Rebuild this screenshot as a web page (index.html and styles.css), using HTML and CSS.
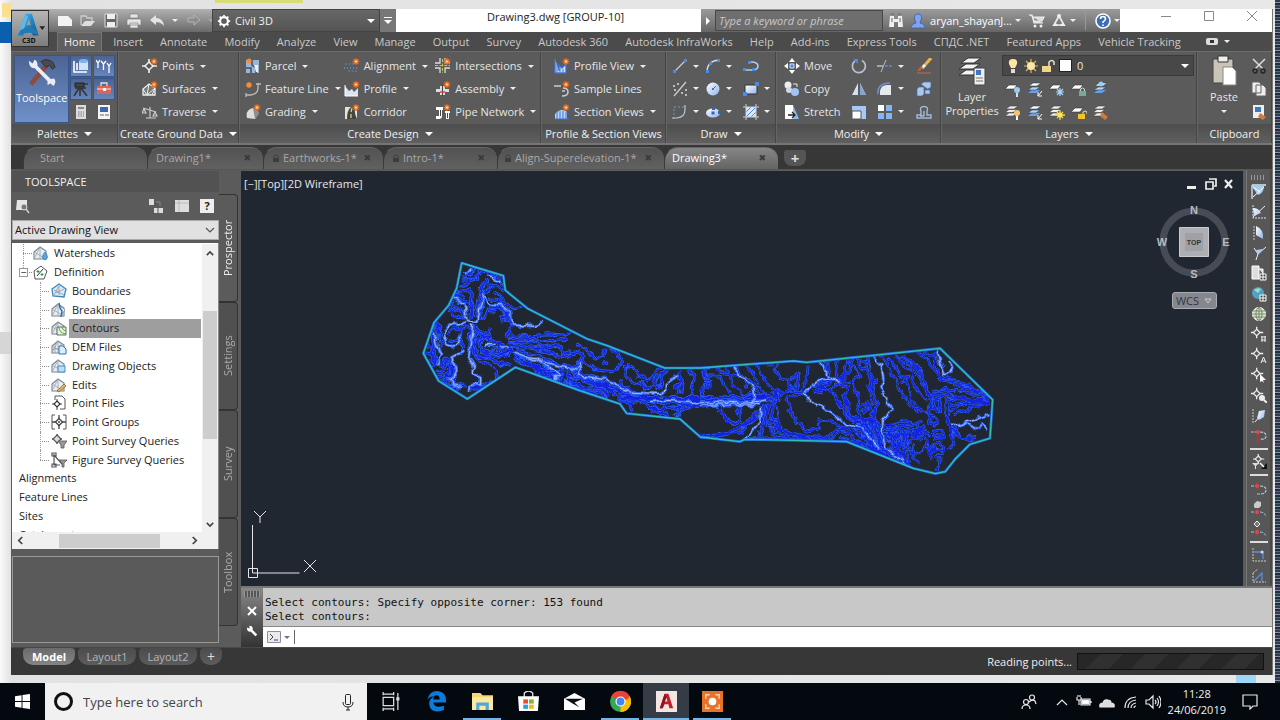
FILE: index.html
```html
<!DOCTYPE html>
<html lang="en">
<head>
<meta charset="utf-8">
<title>Drawing3.dwg [GROUP-10]</title>
<link rel="stylesheet" href="styles.css">
</head>
<body>
<svg class="defs" aria-hidden="true">
<defs>
<linearGradient id="gb" x1="0" y1="0" x2="1" y2="1"><stop offset="0" stop-color="#fff"/><stop offset="1" stop-color="#8fb4e8"/></linearGradient>
<linearGradient id="gA" x1="0" y1="0" x2="1" y2="1"><stop offset="0" stop-color="#5ec0ee"/><stop offset=".5" stop-color="#1c86c8"/><stop offset="1" stop-color="#0d5488"/></linearGradient>
<symbol id="star" viewBox="0 0 16 16"><path d="M12 0v7M8.500 3.500h7M9.500 1l5 5M14.500 1l-5 5" stroke="#e8641b" stroke-width="1.300"/><circle cx="12" cy="3.500" r="2" fill="#f98a35"/><circle cx="12" cy="3.500" r="1" fill="#ffd9a0"/></symbol>
<symbol id="node" viewBox="0 0 16 16"><path d="M7 1v4M7 11v4M0 8h4M10 8h5" stroke="#eee" stroke-width="1.600"/><path d="M7 4l4 4-4 4-4-4z" fill="#555" stroke="#eee" stroke-width="1.500"/></symbol>
<symbol id="pt" viewBox="0 0 16 16"><use href="#node"/><use href="#star"/></symbol>
<symbol id="surf" viewBox="0 0 16 16"><path d="M1 8l6-5 6 4v7H1z" fill="#777" stroke="#eee" stroke-width="1.300"/><path d="M1 8l4 6 8-7-3 7M7 3l-2 11" stroke="#eee" fill="none"/><use href="#star"/></symbol>
<symbol id="trav" viewBox="0 0 16 16"><path d="M1 4l13 4M8 3v11M4 14h10M2 5l-2 4h4zM13 8l-2 4h4z" fill="none" stroke="#ccc" stroke-width="1.200"/></symbol>
<symbol id="parcel" viewBox="0 0 16 16"><path d="M1 2h13v13H1z" fill="#9bb5d4"/><path d="M1 10h5v5M7 2v5l4 3v5" fill="none" stroke="#3f4c66" stroke-width="1.500"/><path d="M9 7h4v7h-2z" fill="#e8eef5"/><circle cx="4" cy="3" r="2.500" fill="#f98a35"/></symbol>
<symbol id="fline" viewBox="0 0 16 16"><path d="M1 14h5q7-1 7-7V2M1 12v4M11 3h5" fill="none" stroke="#bbb" stroke-width="1.300"/><circle cx="4" cy="4" r="2.700" fill="#f98a35"/></symbol>
<symbol id="grad" viewBox="0 0 16 16"><path d="M2 14q-2-8 6-10l5 6-3 5z" fill="#ddd"/><path d="M8 4q6 1 6 6l-4 5z" fill="#8a8f96"/><use href="#star"/></symbol>
<symbol id="align" viewBox="0 0 16 16"><path d="M1 6h10M4 13h10" stroke="#5a86d8" stroke-width="1.200" stroke-dasharray="2 1.500"/><path d="M0 10h14" stroke="#9ab" stroke-dasharray="1 2"/><use href="#star"/></symbol>
<symbol id="prof" viewBox="0 0 16 16"><path d="M1 5l4 5 3-2 2 3 4-4v8H1z" fill="#dce4ee"/><path d="M1 4v11h13" fill="none" stroke="#fff"/><use href="#star"/></symbol>
<symbol id="corr" viewBox="0 0 16 16"><path d="M1 3h12v12H1z" fill="#dfe5dc"/><path d="M3 15q0-9 4-12h4q-1 6 2 12z" fill="#444"/><path d="M8 4l-1 4M7 10v4" stroke="#f5d142" stroke-width="1.300"/><use href="#star"/></symbol>
<symbol id="inter" viewBox="0 0 16 16"><path d="M5 0v5H0M10 0v5h5M5 15v-5H0M10 15v-5h5" fill="none" stroke="#ddd" stroke-width="1.300"/><path d="M7.500 1v14M0 7.500h15" stroke="#b9cc4c" stroke-dasharray="3 1.500"/><use href="#star"/></symbol>
<symbol id="asm" viewBox="0 0 16 16"><path d="M1 8h13v3H1zM5 5h5v9H5z" fill="#ddd"/><path d="M7.500 3v12" stroke="#444"/><path d="M5 11h5" stroke="#d04040" stroke-width="1.500"/><use href="#star"/></symbol>
<symbol id="pipe" viewBox="0 0 16 16"><path d="M1 3h7v3H7v6q0 3-3 3H1v-3h3V6H1zM10 7h5v2h-1v6h-3V9h-1z" fill="#fff"/><path d="M5.500 6v6M12.500 9v5" stroke="#444"/><use href="#star"/></symbol>
<symbol id="pview" viewBox="0 0 16 16"><path d="M1 1v14h11V6L8 10 5 7v6" fill="#cfdff7" stroke="#3a72d8" stroke-width="1.300"/><path d="M3 14V6M6 14V9M9 14v-3" stroke="#3a72d8"/><use href="#star"/></symbol>
<symbol id="sline" viewBox="0 0 16 16"><path d="M0 5h7M9 7q5 0 5 4t-6 4M8 10h3" fill="none" stroke="#ccc" stroke-width="1.500"/><use href="#star"/></symbol>
<symbol id="sview" viewBox="0 0 16 16"><path d="M1 15V10q6-7 12-2v7z" fill="#bcd4f5"/><path d="M3 15V8M6 15V7M9 15V7M12 15V8M1 15h14" stroke="#3a72d8"/><use href="#star"/></symbol>
<symbol id="line" viewBox="0 0 16 16"><path d="M2 14L14 2" stroke="#ccc" stroke-width="1.300"/><path d="M1 12h3v3H1zM12 1h3v3h-3z" fill="#4b8be8"/></symbol>
<symbol id="arc" viewBox="0 0 16 16"><path d="M2 14Q2 3 14 2" fill="none" stroke="#d8e2ee" stroke-width="1.300"/><path d="M1 12h3v3H1zM12 1h3v3h-3zM4 4h3v3H4z" fill="#4b8be8"/></symbol>
<symbol id="pline" viewBox="0 0 16 16"><path d="M2 12h9q4-1 4-4t-5-4H6" fill="none" stroke="#bcd" stroke-width="1.500"/><path d="M0 10h3v3H0zM9 10h3v3H9zM5 3h3v3H5z" fill="#4b8be8"/></symbol>
<symbol id="xline" viewBox="0 0 16 16"><path d="M2 15L14 1" stroke="#ccc" stroke-width="1.300"/><path d="M1 5h2M5 3h2M9 12h2M13 9h2M13 14h2M2 9h2" stroke="#ddd" stroke-width="1.500"/></symbol>
<symbol id="circ" viewBox="0 0 16 16"><circle cx="8" cy="8" r="6.500" fill="url(#gb)"/><path d="M8 8l3-3" stroke="#3a72d8"/><path d="M7 7h2v2H7z" fill="#3a72d8"/></symbol>
<symbol id="rect" viewBox="0 0 16 16"><path d="M2 4h12v9H2z" fill="url(#gb)" stroke="#333"/><path d="M0 11h4v4H0zM12 1h4v4h-4z" fill="#4b8be8"/></symbol>
<symbol id="arc2" viewBox="0 0 16 16"><path d="M2 15V3h11" stroke="#5da0e0" fill="none" stroke-dasharray="2 2"/><path d="M0 14h5q8-1 8-8V1" fill="none" stroke="#bcc8c8" stroke-width="1.200"/></symbol>
<symbol id="ell" viewBox="0 0 16 16"><ellipse cx="8" cy="9" rx="7" ry="4.500" fill="url(#gb)"/><path d="M6.500 7.500h3v3h-3zM7 3h3v3H7zM13 7h3v3h-3z" fill="#3a62b8"/></symbol>
<symbol id="hatch" viewBox="0 0 16 16"><path d="M3 3h10v10H3z" fill="#dceaff"/><path d="M3 8l5-5M3 13L13 3M8 13l5-5" stroke="#4b8be8"/><path d="M3 0v16M13 0v16M0 3h16M0 13h16" stroke="#ccd" /></symbol>
<symbol id="move" viewBox="0 0 16 16"><path d="M8 0l3 4H5zM8 16l3-4H5zM0 8l4-3v6zM16 8l-4-3v6z" fill="#fff"/><path d="M6 6h4v4H6z" fill="#4b8be8" stroke="#cfe0ff"/></symbol>
<symbol id="copy" viewBox="0 0 16 16"><circle cx="4" cy="4" r="3.500" fill="#eee"/><circle cx="5" cy="9" r="3" fill="#cfd8e6"/><circle cx="11" cy="11" r="4" fill="#9fc3f2"/><path d="M9 3h4v3" fill="none" stroke="#eee"/></symbol>
<symbol id="stretch" viewBox="0 0 16 16"><path d="M1 1h8v14H1z" fill="#fff"/><path d="M9 1l6 14H9z" fill="#8db9ef"/><path d="M4 11h7M8 8l3 3-3 3" fill="none" stroke="#222" stroke-width="1.300"/></symbol>
<symbol id="rot" viewBox="0 0 16 16"><path d="M4 3a6.500 6.500 0 1 0 7-.5" fill="none" stroke="#b4c0d0" stroke-width="1.700"/><path d="M2 1h5v5z" fill="#4b8be8"/></symbol>
<symbol id="trim" viewBox="0 0 16 16"><path d="M0 8h6" stroke="#ccc" stroke-width="1.300"/><path d="M8 8h8" stroke="#4b8be8" stroke-width="1.300" stroke-dasharray="3 1"/><path d="M4 14l5-12" stroke="#bbb"/></symbol>
<symbol id="erase" viewBox="0 0 16 16"><path d="M15 0L8 8" stroke="#e7b54f" stroke-width="3"/><path d="M9 7l-3 3" stroke="#eee" stroke-width="3"/><path d="M7 9l-3 4H1l4-5z" fill="#d55a28"/><path d="M1 15h14" stroke="#c76a45"/></symbol>
<symbol id="mirror" viewBox="0 0 16 16"><path d="M7 2v12H1zM9 2v12h6z" fill="#d5e0ec"/><path d="M9 2v12h6z" fill="#86a5cc"/></symbol>
<symbol id="fillet" viewBox="0 0 16 16"><path d="M3 14V10q1-6 7-6h4v10z" fill="#e5e8ec"/><path d="M1 13q-1-11 12-11" fill="none" stroke="#6b94d6" stroke-width="1.500"/></symbol>
<symbol id="explode" viewBox="0 0 16 16"><path d="M5 3l3-2h7v5l-3 2M1 8l2-2h5v7l-2 2H1zM9 9h5v4H9z" fill="#a9c8f0" stroke="#456fa8" stroke-width=".7"/></symbol>
<symbol id="scale" viewBox="0 0 16 16"><path d="M1 2h14v13H1z" fill="#a7c8f4"/><path d="M1 7h9v8H1z" fill="#fff" stroke="#555"/></symbol>
<symbol id="array" viewBox="0 0 16 16"><path d="M1 1h6v6H1z" fill="#fff"/><path d="M9 1h6v6H9zM1 9h6v6H1zM9 9h6v6H9z" fill="#86b4f0"/></symbol>
<symbol id="offset" viewBox="0 0 16 16"><path d="M1 14h14v-3h-4V7.500q2-5-3-5t-3 5V11H1z" fill="none" stroke="#9dbbe0" stroke-width="1.400"/><path d="M4 12h4V7" fill="none" stroke="#cfe0f5"/></symbol>
<symbol id="stack" viewBox="0 0 16 16"><path d="M0 12l4-3h8l-4 3zM0 8.500l4-3h8l-4 3zM1 5l4-3h8L9 5z" fill="#eee" stroke="#444" stroke-width=".6"/></symbol>
<symbol id="stackb" viewBox="0 0 16 16"><path d="M1 12l4-3h8l-4 3z" fill="#6ba0ec"/><path d="M1 9l4-3h8l-4 3z" fill="#b7d2f7" stroke="#345" stroke-width=".6"/><path d="M2 5l4-3h8l-4 3z" fill="#fff" stroke="#345" stroke-width=".6"/></symbol>
<symbol id="sheet" viewBox="0 0 16 16"><path d="M0 8l4-4h8L9 8z" fill="#fff" stroke="#333" stroke-width=".6"/></symbol>
<symbol id="l1" viewBox="0 0 16 16"><use href="#sheet"/><circle cx="12" cy="9" r="3" fill="#9cc9f5"/><path d="M12 12v4" stroke="#dde" stroke-width="2"/></symbol>
<symbol id="l2" viewBox="0 0 16 16"><use href="#stackb"/><path d="M15 10l-4 5M11 11v4h4" stroke="#fff" fill="none"/></symbol>
<symbol id="l3" viewBox="0 0 16 16"><use href="#sheet"/><path d="M11 7v8M7 11h8M8 8l6 6M14 8l-6 6" stroke="#a9d2fa" stroke-width="1.200"/></symbol>
<symbol id="l4" viewBox="0 0 16 16"><use href="#sheet"/><path d="M8 10h7v5H8z" fill="#79a894"/><path d="M9.500 10V8q2-2 4 0v2" fill="none" stroke="#bde0d0"/></symbol>
<symbol id="l5" viewBox="0 0 16 16"><use href="#stackb"/><circle cx="8" cy="3" r="2.500" fill="#9cc9f5"/></symbol>
<symbol id="l6" viewBox="0 0 16 16"><use href="#stack"/><circle cx="12" cy="9" r="3" fill="#f8c56a"/><path d="M12 12v4" stroke="#fff" stroke-width="2"/></symbol>
<symbol id="l8" viewBox="0 0 16 16"><use href="#stack"/><path d="M11 6v10M6 11h10M8 8l6 6M14 8l-6 6" stroke="#f7d541" stroke-width="1.300"/><circle cx="11" cy="11" r="2.500" fill="#fbe360"/></symbol>
<symbol id="l9" viewBox="0 0 16 16"><use href="#sheet"/><path d="M7 10h7v5H7z" fill="#f1c232"/><path d="M12 10V8q2-2 4 0v2" fill="none" stroke="#f1e2a0"/></symbol>
<symbol id="l10" viewBox="0 0 16 16"><use href="#stack"/><path d="M9 8l6 5-3 3-5-4z" fill="#cf7a3a"/></symbol>
<symbol id="house" viewBox="0 0 16 16"><path d="M1 7l6-5 6 4v8H1z" fill="#e9edf2" stroke="#7a8490" stroke-width="1.100"/><path d="M1 14L7 2v12M1 7l12 7" stroke="#9aa3ad" fill="none" stroke-width=".8"/></symbol>
<symbol id="t-water" viewBox="0 0 16 16"><use href="#house"/><path d="M12 7q5 6 0 8-5-2 0-8z" fill="#5aa5de" stroke="#296b9e" stroke-width=".6"/></symbol>
<symbol id="t-def" viewBox="0 0 16 16"><path d="M1 7l7-5 6 5-3 8H2z" fill="#fff" stroke="#555"/><path d="M5 6v3M3.500 7.500h3M9 9v3M7.500 10.500h3" stroke="#2c8f3d"/><path d="M4 12l6-7" stroke="#333"/></symbol>
<symbol id="t-bound" viewBox="0 0 16 16"><path d="M1 6l7-5 7 5-2 8-11-1z" fill="#dfe9f2" stroke="#3d86c0" stroke-width="1.300"/><path d="M3 12l5-9v9M3 7l10 5M13 6l-8 4" stroke="#8a97a5" fill="none" stroke-width=".8"/></symbol>
<symbol id="t-break" viewBox="0 0 16 16"><use href="#house"/><path d="M9 4l5 4-4 5" fill="#fff" stroke="#888" stroke-width=".8"/><path d="M8 1l1 5 2 3-1 6" fill="none" stroke="#2572b4" stroke-width="1.500"/></symbol>
<symbol id="t-cont" viewBox="0 0 16 16"><use href="#house"/><path d="M6 7h9v8H6z" fill="#e4f5dc" stroke="#444" stroke-width=".8"/><path d="M8 7q0 6 7 7M11 7q0 3 4 4" fill="none" stroke="#5ba83e"/></symbol>
<symbol id="t-dem" viewBox="0 0 16 16"><use href="#house"/><path d="M4 4v10M10 4v10M1 10h12" stroke="#999" stroke-width=".7"/><path d="M8 7h4l3 3v5H8z" fill="#d8ecfb" stroke="#3178b5"/></symbol>
<symbol id="t-obj" viewBox="0 0 16 16"><use href="#house"/><path d="M7 8h7v6H7z" fill="#b9e0f7" stroke="#3d8fc6"/></symbol>
<symbol id="t-edit" viewBox="0 0 16 16"><use href="#house"/><path d="M6 14l7-7 2 2-7 6z" fill="#eeb454" stroke="#7b5320" stroke-width=".7"/></symbol>
<symbol id="t-node" viewBox="0 0 16 16"><path d="M8 1v4M8 11v4M1 8h4M11 8h4" stroke="#444" stroke-width="1.300"/><path d="M8 4.500L11.500 8 8 11.500 4.500 8z" fill="#fff" stroke="#444" stroke-width="1.300"/><circle cx="8" cy="8" r="1" fill="#444"/></symbol>
<symbol id="t-pf" viewBox="0 0 16 16"><path d="M4 5V1h7l3 3v10H9" fill="#fff" stroke="#555"/><path d="M6 4v11M1 9h10" stroke="#444"/><path d="M6 6l3 3-3 3-3-3z" fill="#fff" stroke="#333" stroke-width="1.200"/></symbol>
<symbol id="t-pg" viewBox="0 0 16 16"><use href="#t-node"/><path d="M4 1H1v14h3M12 1h3v14h-3" fill="none" stroke="#555"/></symbol>
<symbol id="t-psq" viewBox="0 0 16 16"><path d="M6 1v10M1 6h10" stroke="#555" stroke-width="1.300"/><path d="M6 2l4 4-4 4-4-4z" fill="#ddd" stroke="#555" stroke-width="1.200"/><path d="M7 8h9l-3 4v3h-3v-3z" fill="#999" stroke="#555" stroke-width=".8"/></symbol>
<symbol id="t-fsq" viewBox="0 0 16 16"><path d="M3 2v11h6M3 3l8 9M1 1h4v3H1zM1 12h4v3H1z" fill="none" stroke="#555" stroke-width="1.200"/><path d="M8 8h8l-3 3v4h-2v-4z" fill="#999" stroke="#555" stroke-width=".8"/></symbol>
<symbol id="lock" viewBox="0 0 8 10"><path d="M1 5h6v4H1z" fill="#3d3d3d"/><path d="M2 5V3q2-3 4 0v2" fill="none" stroke="#3d3d3d"/></symbol>
<symbol id="s-tan" viewBox="0 0 16 16"><path d="M1 1h14M1 1v14" stroke="#dde6ee" stroke-width="1.300"/><path d="M2 2h11q0 7-6 9L2 4z" fill="#a8cdf3"/><path d="M2 13L13 3M2 3l7 5" stroke="#fff"/></symbol>
<symbol id="s-ang" viewBox="0 0 16 16"><path d="M2 1v13h13" stroke="#dde6ee" fill="none" stroke-dasharray="2 1"/><path d="M2 4q6 0 8 5l-7 3z" fill="url(#gb)"/><path d="M2 13L14 2" stroke="#eee"/></symbol>
<symbol id="s-sail" viewBox="0 0 16 16"><path d="M5 1q8 3 7 13L5 10z" fill="url(#gb)"/><path d="M3 1v14" stroke="#ccc" stroke-dasharray="2 1"/></symbol>
<symbol id="s-v" viewBox="0 0 16 16"><path d="M3 3l4 6 8-7M7 9l-2 6" stroke="#eee" fill="none"/><path d="M5 5l7-1-5 6z" fill="#a8cdf3"/></symbol>
<symbol id="s-doc" viewBox="0 0 16 16"><path d="M1 1h7v13H1zM8 4h4v5" fill="#ddd" stroke="#fff"/><path d="M9 9h6v6H9zM9 12h6M12 9v6" fill="#444" stroke="#fff"/></symbol>
<symbol id="s-earth" viewBox="0 0 16 16"><circle cx="7" cy="7" r="6" fill="#4da3c4"/><path d="M3 4q4-3 7-1l-3 4z" fill="#a9d9b8"/><path d="M9 9h6v6H9zM9 12h6M12 9v6" fill="#444" stroke="#fff"/></symbol>
<symbol id="s-globe" viewBox="0 0 16 16"><circle cx="8" cy="8" r="6.500" fill="#d6e4c4" stroke="#fff"/><path d="M8 1v14M1 8h14M2 5h12M2 11h12" stroke="#66775e" stroke-width=".8"/><ellipse cx="8" cy="8" rx="3" ry="6.500" fill="none" stroke="#66775e" stroke-width=".8"/></symbol>
<symbol id="s-n1" viewBox="0 0 16 16"><use href="#node" width="13" height="13"/><path d="M10 11h5M10 14h5M11 10v6M14 10v6" stroke="#eee"/></symbol>
<symbol id="s-n2" viewBox="0 0 16 16"><use href="#node" width="13" height="13"/><path d="M10 16l2.500-6 2.500 6M11 14h3" stroke="#eee" fill="none"/></symbol>
<symbol id="s-n3" viewBox="0 0 16 16"><use href="#node" width="13" height="13"/><path d="M9 7l6 6h-3l1 3-2-2-2 1z" fill="#fff"/></symbol>
<symbol id="s-n4" viewBox="0 0 16 16"><use href="#node" width="13" height="13"/><circle cx="11" cy="11" r="3" fill="#eee"/><path d="M13 13l3 3" stroke="#eee" stroke-width="2"/></symbol>
<symbol id="s-fil" viewBox="0 0 16 16"><use href="#node" x="2" y="-1" width="12" height="12"/><path d="M1 9h7l-3 3v3H4v-3z" fill="#ddd"/><path d="M10 15h6V9z" fill="#111"/><path d="M9 9l4 4" stroke="#fff" stroke-width="1.500"/></symbol>
<symbol id="s-pen" viewBox="0 0 16 16"><path d="M2 1v14" stroke="#ccc" stroke-dasharray="2 1"/><path d="M6 10l2-7 6-1-1 7-5 3z" fill="url(#gb)"/><path d="M4 14l6-7" stroke="#eee"/></symbol>
<symbol id="s-red" viewBox="0 0 16 16"><path d="M0 4h6M9 4q6 0 6 4t-6 3" fill="none" stroke="#b8c4d4" stroke-width="1.200" stroke-dasharray="3 1"/><path d="M7 3v12" stroke="#c93333" stroke-width="1.300"/><circle cx="7" cy="4" r="2" fill="#e84545"/></symbol>
<symbol id="s-curve" viewBox="0 0 16 16"><path d="M0 5h5M9 5q6 0 6 4t-6 4H6" fill="none" stroke="#b8c4d4" stroke-width="1.200" stroke-dasharray="3 1"/><path d="M6 1v8" stroke="#c93333"/><circle cx="6" cy="5" r="2" fill="#e84545"/></symbol>
<symbol id="s-rs" viewBox="0 0 16 16"><path d="M3 6V3l3-3 4 1v4l-2 2H4z" fill="#ccc"/><path d="M0 11h4M9 11q4 0 6 4" fill="none" stroke="#a8bcd8" stroke-dasharray="3 1"/><path d="M6 8v7" stroke="#c93333"/><circle cx="6" cy="11" r="2" fill="#e84545"/></symbol>
<symbol id="s-rn" viewBox="0 0 16 16"><path d="M6 0l3 3-3 3-3-3z" fill="#777" stroke="#eee"/><path d="M0 11h4M9 11q4 0 6 4" fill="none" stroke="#a8bcd8" stroke-dasharray="3 1"/><path d="M6 8v7" stroke="#c93333"/><circle cx="6" cy="11" r="2" fill="#e84545"/></symbol>
<symbol id="s-bl" viewBox="0 0 16 16"><path d="M2 1v13h13" stroke="#ccc" fill="none" stroke-dasharray="2 1"/><path d="M2 5h10v7" fill="none" stroke="#5c8de0" stroke-width="1.300"/><circle cx="11" cy="5" r="1.500" fill="#cde"/></symbol>
<symbol id="s-bd" viewBox="0 0 16 16"><path d="M2 5v9h13M2 5l5-4" stroke="#ccc" fill="none" stroke-dasharray="2 1"/><path d="M3 13l8-8v8" fill="none" stroke="#5c8de0" stroke-width="1.300"/></symbol>
</defs>
</svg>

<main class="desktop">
<div class="app">
<header class="titlebar">
  <button class="logo" aria-label="Application menu"><svg viewBox="0 0 38 37"><path d="M6 26L14 3h7l7 23h-6l-2-6h-7l-1 6z" fill="url(#gA)"/><path d="M15 15l3-7 2 7z" fill="#9b9b9b"/><path d="M6 26L14 3l3 3-6 18z" fill="#5fb9e6"/><path d="M9 20q9-5 18 1l1 5q-9-6-22 0z" fill="#2479b5"/><path d="M29 16h6l-3 4z" fill="#222"/></svg><span>C3D</span></button>
  <nav class="quick">
    <button aria-label="New"><svg viewBox="0 0 16 16"><path d="M1 3h10l4 4v6H1z" fill="#f3f3f3"/></svg></button>
    <button aria-label="Open"><svg viewBox="0 0 16 16"><path d="M1 12V3h5l1 2h5v3" fill="none" stroke="#ccc" stroke-width="1.300"/><path d="M1 13l4-5h10l-4 5z" fill="#ddd"/></svg></button>
    <button aria-label="Save"><svg viewBox="0 0 16 16"><path d="M2 1h12v13H2z" fill="#666" stroke="#ddd"/><path d="M4 1h8v5H4zM4 9h8v5H4z" fill="#eee"/></svg></button>
    <button aria-label="Plot"><svg viewBox="0 0 16 16"><path d="M4 1h8v4H4zM1 6h14v6H1zM4 10h8v5H4z" fill="#e4e4e4" stroke="#777" stroke-width=".6"/></svg></button>
    <button aria-label="Undo"><svg viewBox="0 0 16 16"><path d="M1 7l6-5v3q7 0 8 8-3-4-8-4v3z" fill="#e4e4e4"/></svg></button><i class="dd"></i>
    <button aria-label="Redo"><svg viewBox="0 0 16 16"><path d="M15 7L9 2v3H3v4h6v3z" fill="#8c8c8c" stroke="#b4b4b4"/></svg></button><i class="dd dim"></i>
  </nav>
  <label class="workspace"><svg viewBox="0 0 16 16"><circle cx="8" cy="8" r="4.500" fill="none" stroke="#fff" stroke-width="2.500"/><path d="M8 1v2M8 13v2M1 8h2M13 8h2M3 3l1.500 1.500M11.500 11.500L13 13M13 3l-1.500 1.500M3 13l1.500-1.500" stroke="#fff" stroke-width="2"/></svg><select aria-label="Workspace"><option>Civil 3D</option></select><i class="dd big"></i></label>
  <button class="more" aria-label="Customize"><i class="bar"></i><i class="dd big"></i></button>
  <h1>Drawing3.dwg [GROUP-10]</h1>
  <div class="info">
    <button class="tri" aria-label="Expand search"></button>
    <input type="text" aria-label="Search help" placeholder="Type a keyword or phrase">
    <button class="ib" aria-label="Search"><svg viewBox="0 0 16 16"><path d="M2 3h4v3h4V3h4l1 11h-5V9H6v5H1z" fill="#eee"/><path d="M3 1h3M10 1h3M4 5v4M12 5v4" stroke="#666"/></svg></button>
    <button class="ib" aria-label="Account"><svg viewBox="0 0 16 16"><path d="M1 15q0-4 5-5Q2 1 8 1t2 9q5 1 5 5z" fill="#7da4ee" stroke="#3558a8" stroke-width=".7"/></svg></button>
    <span class="user">aryan_shayanJ...</span><i class="dd"></i>
    <button class="ib cart" aria-label="App store"><svg viewBox="0 0 16 16"><path d="M0 2h3l2 8h9M4 4h11l-2 4H5z" fill="#ddd" stroke="#eee" stroke-width="1.200"/><circle cx="6" cy="13" r="1.500" fill="#eee"/><circle cx="12" cy="13" r="1.500" fill="#eee"/></svg></button>
    <button class="ib" aria-label="Stay connected"><svg viewBox="0 0 16 16"><path d="M8 3L3 12h10z" fill="none" stroke="#eee" stroke-width="1.600"/><circle cx="8" cy="3" r="2" fill="#eee"/><path d="M1 13l4-3 2 3zM15 13l-4-3-2 3z" fill="#eee"/></svg></button><i class="dd"></i>
    <i class="rule"></i>
    <button class="ib" aria-label="Help"><svg viewBox="0 0 16 16"><circle cx="8" cy="8" r="7" fill="#3c6eb8" stroke="#fff" stroke-width="1.600"/><path d="M5.500 6q0-2.500 2.500-2.500T10.500 6Q10.500 7 8 9v1M8 11.500v1.500" fill="none" stroke="#fff" stroke-width="1.600"/></svg></button><i class="dd"></i>
  </div>
  <div class="winbtns">
    <button aria-label="Minimize"><svg viewBox="0 0 10 10"><path d="M0 5.500h10" stroke="#888"/></svg></button>
    <button aria-label="Maximize"><svg viewBox="0 0 10 10"><path d="M.5.5h9v9h-9z" fill="none" stroke="#888"/></svg></button>
    <button aria-label="Close"><svg viewBox="0 0 10 10"><path d="M0 0l10 10M10 0L0 10" stroke="#888"/></svg></button>
  </div>
</header>

<nav class="tabs">
  <button class="on">Home</button><button>Insert</button><button>Annotate</button><button>Modify</button><button>Analyze</button><button>View</button><button>Manage</button><button>Output</button><button>Survey</button><button>Autodesk 360</button><button>Autodesk InfraWorks</button><button>Help</button><button>Add-ins</button><button>Express Tools</button><button>СПДС .NET</button><button>Featured Apps</button><button>Vehicle Tracking</button>
  <button class="mini" aria-label="Minimize ribbon"><i class="pill"></i><i class="dd"></i></button>
</nav>

<section class="ribbon">
  <div class="panel"><div class="body palettes">
    <button class="toolspace"><svg viewBox="0 0 32 32"><path d="M4 29L21 9" stroke="#8b4a42" stroke-width="5"/><path d="M15 5q6-5 13 1l2 5-3 2-3-4-4 2z" fill="#4a4a4a" stroke="#222" stroke-width=".7"/><path d="M7 8L26 27" stroke="#e8edf2" stroke-width="4"/><path d="M2 4l4 3 2-4q4 2 3 7l-4 2Q2 11 2 4zM29 23q3 4-1 8l-3-3-3 2q-2-7 7-7z" fill="#e8edf2"/></svg>Toolspace</button>
    <button class="sq" aria-label="Prospector"><svg viewBox="0 0 16 16"><path d="M1 3v11h13M4 5v7" fill="none" stroke="#fff" stroke-width="1.600"/><path d="M6 3h9v9H6z" fill="#cfe2f8"/><ellipse cx="10.500" cy="3" rx="4.500" ry="2" fill="#7fb2ec"/></svg></button>
    <button class="sq" aria-label="Settings"><svg viewBox="0 0 16 16"><path d="M0 2l2 3 2-3M2 5v5M5 3l2.500 3L10 3M7.500 6v6M11 5l2 3 2-3M13 8v7" fill="none" stroke="#fff" stroke-width="1.300"/></svg></button>
    <button class="sq" aria-label="Survey"><svg viewBox="0 0 16 16"><path d="M2 2h9v4H2zM10 3h5" fill="#444" stroke="#222"/><path d="M6 7L1 15M7 7v8M8 7l6 8M2 7h11" stroke="#333" stroke-width="1.500"/></svg></button>
    <button class="sq" aria-label="Toolbox"><svg viewBox="0 0 16 16"><path d="M5 5V2h6v3" fill="none" stroke="#ddd" stroke-width="1.300"/><path d="M1 5h14v8H1z" fill="#d96458"/><path d="M1 8h14" stroke="#fbdedb"/><path d="M7 7h3v3H7z" fill="#fff"/></svg></button>
    <button class="sq flat" aria-label="Calculator"><svg viewBox="0 0 16 16"><path d="M3 1h10v14H3z" fill="#ddd"/><path d="M5 3h6v2H5z" fill="#888"/><path d="M5 8h6M5 10h6M5 12h6" stroke="#777" stroke-dasharray="1.500 1"/></svg></button>
    <button class="sq flat" aria-label="Properties"><svg viewBox="0 0 16 16"><path d="M2 1h12v14H2z" fill="#f5f5f5"/><path d="M4 3h8v5H4z" fill="#3b68b0"/><path d="M4 11h4M9 11h4" stroke="#666"/></svg></button>
  </div><button class="cap">Palettes<i class="dd big"></i></button></div>

  <div class="panel"><div class="body rows one ground">
    <button><svg><use href="#pt"/></svg>Points<i class="dd"></i></button>
    <button><svg><use href="#surf"/></svg>Surfaces<i class="dd"></i></button>
    <button><svg><use href="#trav"/></svg>Traverse<i class="dd"></i></button>
  </div><button class="cap">Create Ground Data<i class="dd big"></i></button></div>

  <div class="panel"><div class="body rows design">
    <button><svg><use href="#parcel"/></svg>Parcel<i class="dd"></i></button><button><svg><use href="#align"/></svg>Alignment<i class="dd"></i></button><button><svg><use href="#inter"/></svg>Intersections<i class="dd"></i></button>
    <button><svg><use href="#fline"/></svg>Feature Line<i class="dd"></i></button><button><svg><use href="#prof"/></svg>Profile<i class="dd"></i></button><button><svg><use href="#asm"/></svg>Assembly<i class="dd"></i></button>
    <button><svg><use href="#grad"/></svg>Grading<i class="dd"></i></button><button><svg><use href="#corr"/></svg>Corridor</button><button><svg><use href="#pipe"/></svg>Pipe Network<i class="dd"></i></button>
  </div><button class="cap">Create Design<i class="dd big"></i></button></div>

  <div class="panel"><div class="body rows one views">
    <button><svg><use href="#pview"/></svg>Profile View<i class="dd"></i></button>
    <button><svg><use href="#sline"/></svg>Sample Lines</button>
    <button><svg><use href="#sview"/></svg>Section Views<i class="dd"></i></button>
  </div><button class="cap">Profile &amp; Section Views</button></div>

  <div class="panel"><div class="body rows draw">
    <button aria-label="Line"><svg><use href="#line"/></svg><i class="dd"></i></button><button aria-label="Arc"><svg><use href="#arc"/></svg><i class="dd"></i></button><button aria-label="Polyline"><svg><use href="#pline"/></svg></button>
    <button aria-label="Construction line"><svg><use href="#xline"/></svg><i class="dd"></i></button><button aria-label="Circle"><svg><use href="#circ"/></svg><i class="dd"></i></button><button aria-label="Rectangle"><svg><use href="#rect"/></svg><i class="dd"></i></button>
    <button aria-label="Curve"><svg><use href="#arc2"/></svg><i class="dd"></i></button><button aria-label="Ellipse"><svg><use href="#ell"/></svg><i class="dd"></i></button><button aria-label="Hatch"><svg><use href="#hatch"/></svg><i class="dd"></i></button>
  </div><button class="cap">Draw<i class="dd big"></i></button></div>

  <div class="panel"><div class="body rows modify">
    <button><svg><use href="#move"/></svg>Move</button><button aria-label="Rotate"><svg><use href="#rot"/></svg></button><button aria-label="Trim"><svg><use href="#trim"/></svg><i class="dd"></i></button><button aria-label="Erase"><svg><use href="#erase"/></svg></button>
    <button><svg><use href="#copy"/></svg>Copy</button><button aria-label="Mirror"><svg><use href="#mirror"/></svg></button><button aria-label="Fillet"><svg><use href="#fillet"/></svg><i class="dd"></i></button><button aria-label="Explode"><svg><use href="#explode"/></svg></button>
    <button><svg><use href="#stretch"/></svg>Stretch</button><button aria-label="Scale"><svg><use href="#scale"/></svg></button><button aria-label="Array"><svg><use href="#array"/></svg><i class="dd"></i></button><button aria-label="Offset"><svg><use href="#offset"/></svg></button>
  </div><button class="cap">Modify<i class="dd big"></i></button></div>

  <div class="panel"><div class="body layers">
    <button class="large"><svg viewBox="0 0 32 32"><path d="M3 20l7-5h14l-7 5zM3 14l7-5h14l-7 5zM5 8l7-5h13l-7 5z" fill="#f4f4f4" stroke="#333"/><path d="M18 13h11v17H18z" fill="#eee" stroke="#444"/><path d="M20 15h5v5h-5z" fill="#3d77c4"/><path d="M20 23h7M20 26h7" stroke="#777"/></svg>Layer<br>Properties</button>
    <div class="layercol">
      <label class="layersel"><svg viewBox="0 0 52 16"><path d="M6 1q5 0 4 5l-2 4H4L2 6q-1-5 4-5z" fill="#fbe6a3"/><path d="M4 11h4v4H4z" fill="#ddd"/><path d="M24 1v14M17 8h14M19 3l10 10M29 3L19 13" stroke="#d8b767" stroke-width="1.200"/><circle cx="24" cy="8" r="4" fill="#fbe6a3"/><path d="M35 8h9v6h-9z" fill="#f3d588"/><path d="M42 8V4q3-3 5 0v3" fill="none" stroke="#e8e0c8" stroke-width="1.500"/></svg><i class="swatch"></i><select aria-label="Layer"><option>0</option></select><i class="dd big"></i></label>
      <div class="lrow"><button aria-label="Layer off"><svg><use href="#l1"/></svg></button><button aria-label="Isolate"><svg><use href="#l2"/></svg></button><button aria-label="Freeze"><svg><use href="#l3"/></svg></button><button aria-label="Lock"><svg><use href="#l4"/></svg></button><button aria-label="Make current"><svg><use href="#l5"/></svg></button></div>
      <div class="lrow"><button aria-label="Turn all on"><svg><use href="#l6"/></svg></button><button aria-label="Unisolate"><svg><use href="#l2"/></svg></button><button aria-label="Thaw all"><svg><use href="#l8"/></svg></button><button aria-label="Unlock"><svg><use href="#l9"/></svg></button><button aria-label="Match layer"><svg><use href="#l10"/></svg></button></div>
    </div>
  </div><button class="cap">Layers<i class="dd big"></i></button></div>

  <div class="panel"><div class="body clip">
    <button class="large"><svg viewBox="0 0 32 32"><path d="M5 4h20v24H5z" fill="#c9c3b8" stroke="#444"/><path d="M10 1h10v6H10z" fill="#eee" stroke="#333"/><path d="M15 12h9l4 4v14H15z" fill="#fff" stroke="#888"/></svg>Paste<i class="dd"></i></button>
    <div class="clipcol">
      <button aria-label="Cut"><svg viewBox="0 0 16 16"><path d="M2 1l10 10M14 1L4 11" stroke="#ddd" stroke-width="1.500"/><circle cx="4" cy="13" r="2" fill="none" stroke="#222" stroke-width="1.300"/><circle cx="12" cy="13" r="2" fill="none" stroke="#222" stroke-width="1.300"/></svg></button>
      <button aria-label="Copy clip"><svg viewBox="0 0 16 16"><path d="M1 1h7l2 2v9H1zM5 4h7l3 3v8H5z" fill="#eee" stroke="#666"/></svg></button>
      <button aria-label="Match properties"><svg viewBox="0 0 16 16"><path d="M2 1h11v13H2z" fill="#eee"/><path d="M4 3h6v5H4z" fill="#3d77c4"/><path d="M9 9l6 4-3 3-5-3z" fill="#d07c3c"/></svg></button>
    </div>
  </div><button class="cap">Clipboard</button></div>
</section>

<nav class="files">
  <button class="f f1">Start</button>
  <button class="f f2">Drawing1*<b>✖</b></button>
  <button class="f f3"><svg><use href="#lock"/></svg>Earthworks-1*<b>✖</b></button>
  <button class="f f4"><svg><use href="#lock"/></svg>Intro-1*<b>✖</b></button>
  <button class="f f5"><svg><use href="#lock"/></svg>Align-Superelevation-1*<b>✖</b></button>
  <button class="f f6 on">Drawing3*<b>✖</b></button>
  <button class="plus" aria-label="New drawing">+</button>
</nav>

<section class="work">
  <aside class="side">
    <div class="tspace">
      <h2>TOOLSPACE</h2>
      <div class="tbar">
        <button aria-label="Preview"><svg viewBox="0 0 16 16"><path d="M2 2h10v10H1z" fill="#e4e4e4"/><circle cx="9" cy="9" r="3" fill="#777" stroke="#ddd"/><path d="M11 11l3 4" stroke="#ccc" stroke-width="1.500"/></svg></button>
        <span class="grow"></span>
        <button aria-label="Panorama"><svg viewBox="0 0 16 16"><path d="M1 1h5v6H1zM6 10h9v5H6z" fill="#ddd"/><path d="M8 4h4v4" stroke="#888" fill="none"/><path d="M10 10v5" stroke="#555"/></svg></button>
        <button aria-label="Item view"><svg viewBox="0 0 16 16"><path d="M1 2h14v12H1z" fill="#ddd"/><path d="M1 5h14M5 2v12" stroke="#bbb"/></svg></button>
        <button class="q" aria-label="Help">?</button>
      </div>
      <label class="view"><select aria-label="View"><option>Active Drawing View</option></select><svg viewBox="0 0 10 6"><path d="M1 1l4 4 4-4" fill="none" stroke="#555" stroke-width="1.200"/></svg></label>
      <div class="tree">
        <div class="treetop">
        <ul>
          <li class="a"><svg><use href="#t-water"/></svg>Watersheds</li>
          <li class="a def"><i class="minus">−</i><svg><use href="#t-def"/></svg>Definition</li>
          <li class="b"><svg><use href="#t-bound"/></svg><span>Boundaries</span></li>
          <li class="b"><svg><use href="#t-break"/></svg><span>Breaklines</span></li>
          <li class="b sel"><svg><use href="#t-cont"/></svg><span>Contours</span></li>
          <li class="b"><svg><use href="#t-dem"/></svg><span>DEM Files</span></li>
          <li class="b"><svg><use href="#t-obj"/></svg><span>Drawing Objects</span></li>
          <li class="b"><svg><use href="#t-edit"/></svg><span>Edits</span></li>
          <li class="b"><svg><use href="#t-pf"/></svg><span>Point Files</span></li>
          <li class="b"><svg><use href="#t-pg"/></svg><span>Point Groups</span></li>
          <li class="b"><svg><use href="#t-psq"/></svg><span>Point Survey Queries</span></li>
          <li class="b last"><svg><use href="#t-fsq"/></svg><span>Figure Survey Queries</span></li>
          <li class="c">Alignments</li><li class="c">Feature Lines</li><li class="c">Sites</li><li class="c">Catchments</li>
        </ul>
        <div class="vs"><svg viewBox="0 0 10 8"><path d="M1 6l4-4 4 4" fill="none" stroke="#444" stroke-width="2"/></svg><i></i><svg viewBox="0 0 10 8"><path d="M1 2l4 4 4-4" fill="none" stroke="#444" stroke-width="2"/></svg></div>
        </div>
        <div class="hs"><svg viewBox="0 0 8 10"><path d="M6 1L2 5l4 4" fill="none" stroke="#444" stroke-width="2"/></svg><i></i><svg viewBox="0 0 8 10"><path d="M2 1l4 4-4 4" fill="none" stroke="#444" stroke-width="2"/></svg></div>
      </div>
      <div class="detail"></div>
    </div>
    <nav class="vtabs"><button class="on">Prospector</button><button>Settings</button><button>Survey</button><button>Toolbox</button></nav>
  </aside>

  <div class="right">
    <div class="stage">
      <div class="viewport">
        <div class="vhead"><span>[−][Top][2D Wireframe]</span><svg viewBox="0 0 46 12"><path d="M0 8h9v3H0z" fill="#eee"/><path d="M22 1h7v7h-2M19 4h7v7h-7z" fill="none" stroke="#eee" stroke-width="1.700"/><path d="M38 2l7 8M45 2l-7 8" stroke="#eee" stroke-width="2.200"/></svg></div>
        <svg class="model" viewBox="241 171 1002 415" preserveAspectRatio="xMidYMid meet">
          <defs>
          <filter id="terrain" x="-5%" y="-5%" width="110%" height="110%"><feTurbulence type="fractalNoise" baseFrequency=".035" numOctaves="2" seed="4" result="n"/><feDisplacementMap in="SourceGraphic" in2="n" scale="26" xChannelSelector="R" yChannelSelector="G"/></filter>
          <clipPath id="k1"><use href="#b1"/></clipPath>
          <clipPath id="k2"><use href="#b2"/></clipPath>
          <g id="c1">
            <path d="M155 65q35-5 38-32M152 75q42 4 58-34M148 92q40-4 70-42M135 112q45-14 55 8l-6 55M128 122q40-12 48 30l4 28M120 140l30 18 24 40M118 155l36 16 20 22M116 165l20 20 36 6M125 130l50 10 12 50"/>
            <path d="M222 48l30 10 25 30M235 54l22 20 20-10M228 75l-14 50-8 60M220 82l-14 44-10 54M232 90q20 0 50 15M240 95l-20 25-10 72M250 108l28 28 32 22 30-5M234 125l30 14 36 30 6 52M240 160q40-10 58 30l-6 55M215 195l22-30 20 5M275 182h16v14h-14z"/>
            <path d="M300 240l70 2 40-6 60 5 12-12M296 250l80 4 30 6 70-8M296 262l74 2 26 16 34-10 28 10-4 20 40-10 30 15M300 270l60 8 50 10 60 20 40-20M500 270l30 10 20 30 30-10 6-22M510 290l10 30 40 25 50 5 28-25-14-35-26-10M580 320h10v8h-8z"/>
            <path d="M195 212l14 30-16 28 10 30 60 4 30-6M200 215l20 20-12 30 6 24 50 6 40-10M205 225l30 10 20 28 30 8M212 240l30 20 30 10M196 230l-10 50 20 24 50 14 50 16M225 250l20-28M185 270l8 34 30 22 40 20-4 30M218 282q24 15 48-10"/>
            <path d="M72 205l6 60-6 30 20 35M66 222l8 50-14 20 16 40M50 262l22 30-10 24M45 290l30 20-8 30M80 200l10 50 8 30"/>
            <path d="M78 355l22-14 14-22M84 365l30-16 8-34M92 375l30-16 8-35M100 385l36-20M88 335l26-22 24 20-8 28-34 20M95 340l20-16 16 14-8 22M110 390l40-4 20 10M120 398l30-2M135 408l20-6M180 410l60-36M176 396l44 4"/>
            <path d="M100 230q20-26 60-18l14 4M115 240q5-16 40-18M115 250q20 16 38-4M165 215l-10 30-4 50M180 212l-4 80"/>
            <path d="M262 270l32 4 12 18-24 8-18-16zM270 264l34 16 10 22M276 276l14 2 4 10-14 2zM310 295l50 18 60 24 20 28-30 10M310 300l60 32 50 22M320 286l70 14 60 30 54 6 16 20 60 14 70 40 60 12M312 310l60 26 48 20 30 12M330 318l60 30 50 26M350 325l50 22 60 20M380 345l-8 14M410 352l-10 16M340 320l40 18M400 340l60 14"/>
            <path d="M455 330l-6 50M470 340l6 40 60 24M480 345l60 24 60 34 50 14M490 355l56 24 50 26M470 360l80 26 40 30M476 370l50 30 40 10M520 290l-20 46M525 300l-14 36M460 380l60 30 60 12M500 400l60-6 30 30M530 380l60 12 20 30 60 4M555 375l50 22M600 415l60-18"/>
            <path d="M650 330l-2 34 32 24 10-6 14 20 30-10 8-30 22-10M655 335l20 10 14 20 20 15 20-16 10-20 18-4M638 370l-6 20 50 24M600 395l60 26 60 10 80-4 100 8M630 425l60 6M620 435l50 8-10 20M640 440l60-4 30 6 90 0M680 440l50 20 60 0 40-10M700 445l50 24 30 16M660 445l10 24M740 440l-20 30M770 440l-20 40M800 445l30 4 30 6M850 440l-45 20-10 24M900 450l-60 6-30 14-8 20"/>
            <path d="M770 345l-20 24 8 14-20 20M812 350l-6 20 10 20-4 22M806 350l8 26-14 20 4 20M840 340l12 30-8 30 6 24M876 345l12 20-10 40 6 20M890 380h10v10h-10z"/>
            <path d="M640 428h260M700 434h200M720 438l60-6 60 10 60-4M760 425l60 8 80-4M690 420l60 16M630 430l50 4 60-2"/>
          </g>
          <g id="c2">
            <path d="M0 428h180l30-8M0 434h150l60-8M0 442h180M0 448l100 6 80-8M10 440l120 4 60-10M140 426l80 8M160 420l40 20M150 450l60-26"/>
            <path d="M5 345l10 20 50 2 8 30 20 20M20 340l-10 15M50 335l10 20 30 4 10 30 30 30 30 0M70 335l20 20 40 10 10 35M105 335l30 34 30 20 20 40M135 330l20 20 20 40 24 28M175 326l8 30 28 40 8 14M200 330l18 0M20 382h16v14H20z"/>
            <path d="M230 325l-8 20 22 28 30 4 20-20-4 40-30 10M325 326l-5 50-20 30-40 4-40 4M300 358l-28 6-10 30 14 6M215 405l20 20 10-14 40-2M210 410l30 22-30 10M222 404l6 30M235 400l-20 30M244 404l-26 24"/>
            <path d="M50 460l20 14 8 28 40 0 10-35M60 460l25 40M110 480l14-24M0 540q100 10 170-60M20 538q90 2 130-50M40 545l80-14 60-70M190 448l-4 60-10 40M195 448l4 60 30 38M205 445l-10 50 30 30 40 20M213 440l6 50 40 40 60 20M220 436l-10 60 50 30 80 20M228 434l8 46-10 34 70 26 90 10M260 425l10 40 20 40 30 20 30-5 10-26 40 10 30 15M270 430l40-20"/>
            <path d="M310 410l60-30 40 0M340 410l30 0 40-20 40-10M350 400l70-30 30-20 10-40M375 320l16 40 20 14M390 315l-4 46 30 20M415 315l-6 40 4 24M440 312l-8 56-20 14M345 395l50 10 36 60 20 30M360 390l50 30 30 60 10 16M410 376l30 30-10 20 10 30 20 40M420 376l20 20-6 26 16 60M344 412l20 4 4-20z"/>
            <path d="M440 310l30 36 10 20-20 10 8 40 10 60 10 16M470 310l16 30 30 20-10 60 20 40-6 30M500 306l8 40 14 16-8 40 16 40-14 44M480 315l18 8-6 20-14-6M515 370h14v10h-12zM480 450l24 4-6 16-14-6M500 440l12 20-20 10"/>
            <path d="M545 305l20 30 20 40 16 40 40 50 16 10M560 304l20 24 30 40 20 40 10 40 40 24M585 302l18 18 30 30 10 40 40 50M600 304l30 24 30 40 14 30 20 30M610 300l40 34 26 40 4 30 20 24M655 295l30 20 26 50 60 26 90 30M670 290l34 10 10 60 60 20 80 40M598 370l24-6-4 18-16 0M640 464l22 0 6 10"/>
            <path d="M700 410l60-10 30 10 80 20M700 420l50-12 30 20 90 10M705 430l40-10 40 12 80 10M740 430l80 4 50 0M745 450l80-10 45 0M750 465l60-20 56-2M760 480l60-24 48-12M690 430l30 4-4 30-24-4zM700 430l6 40M696 445l20-20M740 430l-10 40 20 40 8 50M750 440l-6 50 14 40 30 20 40-6M745 500l20 20-4 40-14 24M695 425l-10 50 10 20"/>
            <path d="M380 545l20-16 50-10 40 30 50 40M390 550l30-20 30 6M400 528l40-10 60 10 20 40 26 26M450 500l50-10 36 20 20 60 50 46M460 496l60 0 30 80 60 50M470 505l40 0 26 60 60 50M445 510l50 4 24 60M440 530l50 40 60 34M430 545l60 24 40 20M420 550l60 20M455 490l70 4 20 20M478 486l50 8M500 490l20 90 40 26M485 500l20 60 40 34M490 490l40 80 50 40M510 490l30 76 60 50M455 518l30 12 30 50"/>
            <path d="M545 510l60-14 30 10 30-8M550 520l60-10 60 16M555 530l70-6 30 20M560 540l60 0M555 550l50-10-4 60M560 560l34 0 0 40M570 520l10 70 20 24M580 516l10 60 30 50M590 514l10 70 26 44M600 514l12 60 20 50M612 520l8 50 20 30M620 530l8 40M630 560l20-14 30 10-16 30-20 10 12 30M640 570l0 34 20 20M540 570l80 60M560 580l70 52M540 580l40 34M570 570l50 60"/>
            <path d="M640 520l50 20M650 505l20 50M675 510l-40 34M632 540h50M660 515l-8 40M640 530l30-8 20 20M645 545l20-26M700 530l20-4 14 20-30 6zM706 540l16 4M700 570l22-10 8 26-26-6zM680 560l10 50 10-30M690 570l0 34 14-24M705 600l16 14-6 34M710 595l20 0M685 500l10-20 20 20-10 14z"/>
            <path d="M150 550l200 5M200 548l180 12M240 545l150 10"/>
          </g>
          <path id="b1" d="M155 24L280 62L286 106L352 160L532 252L592 272L764 339H900V548H872L810 492L650 475L630 447L510 407L316 337L172 432L86 378L40 295L72 203L116 151L140 100Z"/>
          <path id="b2" d="M-10 337H0L280 318L320 322L720 280L878 434L870 550L810 568L766 612L736 650L706 656L640 640L440 560L135 553L120 560L0 546H-10Z"/>
          <path id="e1" d="M900 339H764L592 272L532 252L352 160L286 106L280 62L155 24L140 100L116 151L72 203L40 295L86 378L172 432L316 337L510 407L630 447L650 475L810 492L872 547H900"/>
          <path id="e2" d="M-30 339H0L280 318L320 322L720 280L878 434L870 550L810 568L766 612L736 650L706 656L640 640L440 560L135 553L120 560L0 546"/>
          <path id="w1" d="M162 52q18 4 22-16M235 62l36 18M126 130l34 16 12 50 28 6 20-84 20 30 36 6 20 20 12 36 70 4 20-18M100 238q0-24 54-32l14-6M100 238q6 46 44 32l12-34M188 208l-8 70-4 30 16 24-2 26 22 8v20l-32 6v22M76 230l6 40 14 34-20 26M160 290l-36 14 16 40-8 16-16 12 36 30M310 294l100 28 88 24 12-24 0 38 70 14 90 38 86 4 26-42 22-12M350 308l70 28 30 24-20 10M222 272h30M270 276l24 0M720 440l40-4 140 6"/>
          <path id="w2" d="M0 440l150 4 50-10M0 450h160l20-6M95 335l38 34 28 34 4 30-10 14M182 455l-8 50-20 34-28 20M358 320l24 36 30 22-40-6-34 20-28 20 26 26 70 40 28 30 50 10 50 60M520 300l24 30 6 40-6 24 28 60 6 12-30 30 8 80 60 48M710 285l8 30 14 40 24-2 4-18-14-14M760 512l40-10 60-20 8 0M800 502l30 20 14-14 20 14"/>
          </defs>
          <g fill="none" stroke-linejoin="round">
            <g transform="translate(410 255) scale(.3333)">
              <g clip-path="url(#k1)"><g filter="url(#terrain)">
                <use href="#c1" stroke="#2c60ef" stroke-width="9"/><use href="#c1" stroke="#1420de" stroke-width="4"/>
                <use href="#w1" stroke="#2f66f2" stroke-width="9"/><use href="#w1" stroke="#a9b8f5" stroke-width="3"/>
              </g></g>
              <use href="#e1" stroke="#1d66e0" stroke-width="8"/><use href="#e1" stroke="#30bdb4" stroke-width="4"/>
            </g>
            <g transform="translate(700 255) scale(.3333)">
              <g clip-path="url(#k2)"><g filter="url(#terrain)">
                <use href="#c2" stroke="#2c60ef" stroke-width="8"/><use href="#c2" stroke="#1420de" stroke-width="4"/>
                <use href="#w2" stroke="#2f66f2" stroke-width="9"/><use href="#w2" stroke="#a9b8f5" stroke-width="3"/>
              </g></g>
              <use href="#e2" stroke="#1d66e0" stroke-width="8"/><use href="#e2" stroke="#30bdb4" stroke-width="4"/>
            </g>
            <path d="M252.500 525v48h47M248.500 568.500h9v9h-9zM254 511l6 6 6-6M260 517v6M304 560l12 12M316 560l-12 12" stroke="#e4e6e8"/>
          </g>
        </svg>
        <div class="cube"><svg viewBox="0 0 80 80"><circle cx="40" cy="40" r="31" fill="none" stroke="#464b56" stroke-width="7"/><path d="M25.500 25.500h29v29h-29z" fill="#adafb4" stroke="#c9cace"/><path d="M31 31h18v18H31z" fill="#9fa1a6"/><g class="ct"><text x="40" y="12">N</text><text x="40" y="76">S</text><text x="8" y="44">W</text><text x="72" y="44">E</text></g><text class="top" x="40" y="43">TOP</text></svg><button>WCS<svg viewBox="0 0 8 6"><path d="M1 1h6L4 5z" fill="none" stroke="#ccc"/></svg></button></div>
      </div>
      <div class="stools">
        <i class="grip"></i>
        <button aria-label="Bearing"><svg><use href="#s-tan"/></svg></button><button aria-label="Angle"><svg><use href="#s-ang"/></svg></button><button aria-label="Deflection"><svg><use href="#s-sail"/></svg></button><button aria-label="Azimuth"><svg><use href="#s-v"/></svg></button><button aria-label="Grid northing"><svg><use href="#s-doc"/></svg></button><button aria-label="Latitude"><svg><use href="#s-earth"/></svg></button><button aria-label="Globe"><svg><use href="#s-globe"/></svg></button><button aria-label="Point number"><svg><use href="#s-n1"/></svg></button><button aria-label="Point name"><svg><use href="#s-n2"/></svg></button><button aria-label="Point object"><svg><use href="#s-n3"/></svg></button><button aria-label="Zoom to point"><svg><use href="#s-n4"/></svg></button><button aria-label="Side shot"><svg><use href="#s-pen"/></svg></button><button aria-label="Station offset"><svg><use href="#s-red"/></svg></button>
        <hr><button aria-label="Filter"><svg><use href="#s-fil"/></svg></button><hr>
        <button aria-label="Profile station"><svg><use href="#s-curve"/></svg></button><button aria-label="Profile surface"><svg><use href="#s-rs"/></svg></button><button aria-label="Profile point"><svg><use href="#s-rn"/></svg></button>
        <hr><button aria-label="Orthogonal"><svg><use href="#s-bl"/></svg></button><button aria-label="Diagonal"><svg><use href="#s-bd"/></svg></button>
      </div>
    </div>
    <div class="cmd">
      <div class="cmdside"><i class="grip"></i><button aria-label="Close"><svg viewBox="0 0 12 12"><path d="M2 2l8 8M10 2l-8 8" stroke="#fff" stroke-width="2"/></svg></button><button aria-label="Customize"><svg viewBox="0 0 14 14"><path d="M5 5l7 7" stroke="#fff" stroke-width="3"/><path d="M1 3l3 1V1q4 0 4 4L5 8Q1 8 1 3z" fill="#fff"/></svg></button></div>
      <div class="cmdmain">
        <pre>Select contours: Specify opposite corner: 153 found
Select contours:</pre>
        <div class="prompt"><svg viewBox="0 0 14 12"><path d="M.5.5h13v11H.5z" fill="#e8eaf0" stroke="#8a90a0"/><path d="M3 3l3 3-3 3M7 9h4" fill="none" stroke="#444"/></svg><i class="dd dark"></i><i class="caret"></i><input type="text" aria-label="Command"></div>
      </div>
    </div>
  </div>
</section>

<footer class="status">
  <nav class="layouts"><button class="on">Model</button><button>Layout1</button><button>Layout2</button><button class="add" aria-label="New layout">+</button></nav>
  <span class="reading">Reading points...</span><div class="progress" role="progressbar" aria-label="Reading points"></div>
</footer>
</div>
</main>

<footer class="taskbar">
  <button class="start" aria-label="Start"><svg viewBox="0 0 16 16"><path d="M0 2.300L7 1.300v6.200H0zM8 1.100L16 0v7.500H8zM0 8.500h7v6.200l-7-1zM8 8.500h8V16l-8-1.100z" fill="#fff"/></svg></button>
  <label class="search"><i class="ring"></i><input type="text" placeholder="Type here to search" aria-label="Search"><svg viewBox="0 0 12 18"><rect x="3.500" y="1.500" width="5" height="10" rx="1" fill="none" stroke="#222"/><path d="M1 9q0 5 5 5t5-5M6 14v3M4 17h4" fill="none" stroke="#222"/></svg></label>
  <nav class="pins">
    <button aria-label="Task view"><svg viewBox="0 0 20 20"><path d="M3 3h10M3 17h10M3 6h10v8H3zM3 1v3M13 1v3M3 16v3M13 16v3M17 2v16" fill="none" stroke="#ddd" stroke-width="1.200"/><path d="M15.500 6h3v3h-3z" fill="#ddd"/></svg></button>
    <button aria-label="Edge"><svg viewBox="0 0 20 20"><path d="M1 9Q3 0 11 0q9 1 8 11H7q1 6 10 3v4Q3 23 3 11q1-4 5-6Q3 5 1 9zM7 8h6q0-4-3-4T7 8z" fill="#0c7cdc"/></svg></button>
    <button class="run" aria-label="File Explorer"><svg viewBox="0 0 20 20"><path d="M0 2h8l2 2h10v14H0z" fill="#f7d774"/><path d="M0 6h20v12H0z" fill="#fbe8a2"/><path d="M4 18v-7h12v7h-3v-4H7v4z" fill="#4fa8d8"/></svg></button>
    <button aria-label="Store"><svg viewBox="0 0 20 20"><path d="M6 6V2q4-4 8 0v4" fill="none" stroke="#ddd" stroke-width="1.300"/><path d="M0 5h20l-1 14H1z" fill="#fff"/><path d="M5 8h4.500v4H5z" fill="#e8502a"/><path d="M10.500 8H15v4h-4.500z" fill="#7cb82f"/><path d="M5 13h4.500v4H5z" fill="#2a9fe8"/><path d="M10.500 13H15v4h-4.500z" fill="#f6b71b"/></svg></button>
    <button aria-label="Mail"><svg viewBox="0 0 22 20"><path d="M0 7l11-6 11 6v12H0z" fill="#fff"/><path d="M1 7h19l-9 4 5 5-7-4z" fill="#0b0e14"/></svg></button>
    <button class="run" aria-label="Chrome"><svg viewBox="0 0 20 20"><circle cx="10" cy="10" r="10" fill="#34a853"/><path d="M10 10L1.300 5A10 10 0 0 1 18.700 5z" fill="#ea4335"/><path d="M10 10l8.700-5A10 10 0 0 1 10 20z" fill="#fbbc05"/><path d="M10 5h8.700l-2 3H10z" fill="#ea4335"/><circle cx="10" cy="10" r="4.800" fill="#fff"/><circle cx="10" cy="10" r="3.700" fill="#4285f4"/></svg></button>
    <button class="run active" aria-label="AutoCAD"><svg viewBox="0 0 22 22"><path d="M0 0h22v22H0z" fill="#f4e5e2"/><path d="M4 18L9 3h4l5 15h-4l-1-4H9l-2 4zM9 11h3l-1-4z" fill="#c01f2d"/><path d="M4 18L9 3l2 3-4 12z" fill="#8d1420"/></svg></button>
    <button class="run" aria-label="Recorder"><svg viewBox="0 0 22 22"><path d="M0 0h22v22H0z" fill="#e9722b"/><circle cx="11" cy="11" r="4" fill="#fff"/><path d="M4 8V4h4M14 4h4v4M18 14v4h-4M8 18H4v-4" fill="none" stroke="#fbd2b4" stroke-width="1.500"/></svg></button>
  </nav>
  <div class="tray">
    <svg class="i16" viewBox="0 0 16 16"><circle cx="11" cy="3.500" r="2.500"/><circle cx="5" cy="8" r="2.500"/><path d="M1 15q0-4 4-4t4 4M8 8q3-3 6-1l1 3"/></svg>
    <svg class="i12 chev" viewBox="0 0 12 12"><path d="M1 9l5-5 5 5"/></svg>
    <svg class="i16" viewBox="0 0 16 16"><path d="M5 5h9v6H5zM15 7v2M1 3v3h4V3M2 1v2M4 1v2M3 6v5"/><path d="M6 6h7v4H6z" fill="#fff"/></svg>
    <svg class="i16" viewBox="0 0 16 16"><path d="M1 13q-1-4 3-4 1-4 5-3 3 0 3 3 4 0 3 4z" fill="#ddd"/></svg>
    <svg class="i16" viewBox="0 0 16 16"><path d="M3 14Q3 4 14 3M6 14q0-7 8-8M9 14q0-4 5-5M12 14q0-2 2-2"/></svg>
    <svg class="i16" viewBox="0 0 16 16"><path d="M1 6h3l4-4v12l-4-4H1zM10 6q2 2 0 4M12 4q3 4 0 8M14 2q4 6 0 12"/></svg>
    <time>11:28<br>24/06/2019</time>
    <svg class="i16 note" viewBox="0 0 16 16"><path d="M1 1h14v11h-4l-3 3v-3H1z"/></svg>
  </div>
</footer>
</body>
</html>
```
FILE: styles.css
```css
* { box-sizing: border-box; }
body { margin: 0; height: 100vh; display: flex; flex-direction: column; overflow: hidden; font: 11px/16px "Open Sans", "Noto Sans", sans-serif; color: #e6e6e6; background: #f4f4f4; }
button, input, select { font: inherit; color: inherit; background: none; border: 0; padding: 0; margin: 0; appearance: none; outline: 0; border-radius: 0; }
button { display: flex; align-items: center; white-space: nowrap; }
svg { display: block; flex: none; }
ul { list-style: none; margin: 0; padding: 0; }
h1, h2 { margin: 0; font-size: 11px; font-weight: 400; }
i { display: block; flex: none; }
.defs { position: absolute; width: 0; height: 0; }

.desktop { flex: 1; min-height: 0; display: flex; padding: 9px 7px 8px 11px;
  background:
    linear-gradient(#d7dc78, #d7dc78) 215px 0 / 88px 3px no-repeat,
    linear-gradient(#fae08c, #fae08c) 2px 3px / 9px 14px no-repeat,
    linear-gradient(#0a5fae, #0a5fae) 0 22px / 11px 21px no-repeat,
    linear-gradient(#d6d6d6, #d6d6d6) 0 332px / 11px 22px no-repeat,
    linear-gradient(#9ed8f4, #9ed8f4) right 24px bottom 0 / 20px 8px no-repeat,
    repeating-linear-gradient(#2b3f52 0 2px, #9a8aa8 2px 3px, #123340 3px 5px, #6d5f6e 5px 6px) right 0 top 0 / 5px 100% no-repeat,
    linear-gradient(90deg, #fafafa, #e2e2e2 11px, #e8e8e8); }
.app { flex: 1; min-width: 0; display: flex; flex-direction: column; background: #5b5b5b; border-right: 1px solid #777; }

.dd { width: 0; height: 0; border: solid transparent; border-width: 3px 3px 0; border-top-color: #eee; margin-left: 6px; }
.dd.big { border-width: 4px 4px 0; border-top-color: #fff; }
.dd.dim { border-top-color: #aaa; }
.dd.dark { border-top-color: #777; }

.titlebar { position: relative; height: 23px; flex: none; display: flex; align-items: stretch; background: #fff; color: #222; }
.logo { position: absolute; left: 0; top: 1px; width: 38px; height: 37px; z-index: 2; background: linear-gradient(#b5b5b5, #7d7d7d); border: 1px solid #333; }
.logo svg { width: 36px; height: 35px; }
.logo span { position: absolute; left: 10px; bottom: 0; font: bold 7px/10px "Open Sans", sans-serif; color: #111; }
.quick { flex: none; width: 201px; padding-left: 46px; display: flex; align-items: center; gap: 7px; background: linear-gradient(#b0b0b0, #6a6a6a); }
.quick svg { width: 16px; height: 16px; }
.quick .dd { margin: 0; }
.workspace { flex: none; width: 168px; display: flex; align-items: center; gap: 4px; padding: 0 4px; background: linear-gradient(#676767, #555); border: 1px solid #444; color: #f0f0f0; }
.workspace svg { width: 14px; height: 14px; }
.workspace select { flex: 1; }
.more { flex: none; width: 16px; flex-direction: column; justify-content: center; gap: 2px; background: #777; }
.more .bar { width: 8px; height: 1px; background: #fff; }
.more .dd { margin: 0; }
.titlebar h1 { flex: 1; min-width: 0; padding-left: 14px; text-align: center; line-height: 16px; color: #222; }
.info { flex: none; width: 419px; display: flex; align-items: center; background: linear-gradient(#9b9b9b, #666); color: #fff; }
.info .tri { width: 0; height: 0; margin: 0 5px 0 5px; border: solid transparent; border-width: 4px 0 4px 4px; border-left-color: #fff; }
.info input { width: 169px; height: 21px; background: #6e6e6e; border: 1px solid #484848; padding: 0 3px; }
.info input::placeholder { color: #c8c8c8; font-style: italic; opacity: 1; }
.ib { margin-left: 5px; }
.ib + .ib { margin-left: 6px; }
.info .dd { margin-left: 3px; }
.info .user { margin-left: 4px; }
.info .cart { margin-left: 8px; }
.rule { width: 1px; height: 18px; background: #999; margin: 0 4px 0 9px; }
.info svg { width: 16px; height: 16px; }
.winbtns { flex: 0 0 152px; display: flex; justify-content: space-between; align-items: flex-start; padding: 2px 15px 0 41px; }
.winbtns svg { width: 10px; height: 10px; }

.tabs { flex: none; height: 19px; display: flex; justify-content: space-between; align-items: stretch; padding: 0 42px 0 46px; background: #4b4b4b; color: #c9c9c9; }
.tabs .on { padding: 0 6px; background: #5f5f5f; border: 1px solid #747474; border-bottom: 0; color: #f0f0f0; margin-right: -6px; }
.pill { width: 12px; height: 7px; border-radius: 2px; background: linear-gradient(90deg, #ddd 4px, #333 4px 8px, #ddd 8px); margin-left: 8px; border: 1px solid #ddd; border-width: 2px 0; }
.tabs .mini .dd { margin-left: 6px; }

.ribbon { flex: none; height: 94px; display: grid; grid-template-columns: minmax(0,107fr) minmax(0,121fr) minmax(0,302fr) minmax(0,125fr) minmax(0,110fr) minmax(0,165fr) minmax(0,256fr) minmax(0,75fr); background: #5b5b5b; border-top: 1px solid #6c6c6c; border-bottom: 2px solid #757575; }
.panel { display: flex; flex-direction: column; border-right: 1px solid #454545; border-left: 1px solid #666; }
.panel .body { height: 72px; flex: none; padding-top: 3px; padding-bottom: 1px; }
.cap { flex: 1; justify-content: center; background: linear-gradient(#4e4e4e, #5f5f5f); color: #f0f0f0; }
.rows { display: grid; grid-template-rows: repeat(3, minmax(0, 1fr)); }
.rows svg, .lrow svg, .stools svg, .clipcol svg { width: 16px; height: 16px; }
.rows svg { margin-right: 4px; }
.ground { padding-left: 23px; }
.design { grid-template-columns: minmax(0, 99fr) minmax(0, 92fr) minmax(0, 105fr); padding-left: 5px; }
.views { padding-left: 12px; }
.draw { grid-template-columns: 33fr 38fr 32fr; padding-left: 5px; }
.draw .dd, .modify .dd { margin-left: 1px; }
.modify { grid-template-columns: 67fr 27fr 39fr 24fr; padding-left: 7px; }
.palettes { display: grid; grid-template-columns: 56fr 22fr 22fr; grid-template-rows: repeat(3, 1fr); gap: 1px; padding-left: 2px; padding-right: 2px; }
.toolspace { grid-row: span 3; flex-direction: column; gap: 3px; padding-top: 1px; background: linear-gradient(#4b6494, #6f90c8); border: 1px solid #38558a; color: #fff; }
.toolspace svg { width: 32px; height: 30px; }
.sq { justify-content: center; background: linear-gradient(#4b6494, #6785bb); border: 1px solid #38558a; }
.sq.flat { background: none; border-color: transparent; }
.sq svg { width: 16px; height: 16px; }
.layers { display: flex; }
.large { flex-direction: column; line-height: 14px; text-align: center; }
.layers .large { width: 60px; gap: 3px; }
.large svg { width: 32px; height: 32px; }
.layercol { flex: 1; display: grid; grid-template-rows: 22px 1fr 1fr; padding-right: 2px; }
.layersel { display: flex; align-items: center; padding: 0 4px; background: #484848; border: 1px solid #3a3a3a; height: 21px; }
.layersel svg { width: 52px; height: 16px; }
.swatch { width: 13px; height: 13px; background: #fff; border: 1px solid #222; }
.layersel select { flex: 1; margin-left: 5px; }
.lrow { display: flex; align-items: center; gap: 6px; padding-left: 3px; }
.clip { display: flex; justify-content: space-between; padding-right: 4px; }
.clip .large { width: 52px; gap: 3px; }
.clip .dd { margin: 3px 0 0; }
.clipcol { display: grid; grid-template-rows: repeat(3, 1fr); }

.files { flex: none; height: 25px; display: flex; align-items: flex-end; padding-left: 12px; background: #373737; color: #a8a8a8; border-bottom: 1px solid #555; }
.f { height: 22px; flex: none; background: linear-gradient(#525252, #616161); border-radius: 14px 12px 0 0; border-top: 1px solid #666; padding: 0 12px 2px 8px; border-left: 1px solid #3a3a3a; }
.f svg { width: 8px; height: 10px; margin: 0 3px 0 0; }
.f b { margin-left: auto; font: 9px/12px "DejaVu Sans", sans-serif; color: #3a3a3a; }
.f1 { width: 124px; padding-left: 16px; } .f2 { width: 116px; } .f3 { width: 120px; } .f4 { width: 114px; } .f5 { width: 167px; padding-left: 6px; } .f6 { width: 114px; }
.f.on { background: linear-gradient(#868686, #646464); color: #fff; padding-left: 7px; }
.plus { width: 22px; height: 16px; margin: 0 0 3px 6px; justify-content: center; background: #555; border-radius: 3px 3px 8px 8px; color: #ddd; font-size: 15px; font-weight: 700; }

.work { flex: 1; min-height: 0; display: flex; background: #5b5b5b; }
.side { flex: 0 0 230px; display: flex; padding-top: 1px; }
.tspace { flex: 1; min-width: 0; display: flex; flex-direction: column; padding-left: 1px; }
.tspace h2 { height: 21px; line-height: 21px; padding-left: 13px; background: #525252; color: #f0f0f0; }
.tbar { height: 28px; display: flex; align-items: center; gap: 10px; padding: 0 5px 0 3px; flex: none; }
.tbar svg { width: 16px; height: 16px; }
.grow { flex: 1; }
.tbar .q { width: 14px; height: 14px; background: #eee; color: #222; justify-content: center; font-weight: 700; }
.view { height: 20px; flex: none; display: flex; align-items: center; background: #e1e1e1; border: 1px solid #aaa; padding: 0 3px 0 2px; color: #111; }
.view select { flex: 1; } .view svg { width: 10px; height: 6px; }
.tree { flex: none; height: 306px; margin-top: 3px; padding-top: 1px; display: flex; flex-direction: column; background: #fff; border-right: 1px solid #888; color: #222; }
.treetop { height: 288px; overflow: hidden; display: flex; }
.tree ul { flex: 1; height: 300px; display: grid; grid-template-rows: repeat(16, minmax(0, 1fr)); }
.tree li { display: flex; align-items: center; position: relative; }
.tree li svg { width: 16px; height: 16px; margin-right: 5px; }
.a { padding-left: 21px; }
.a::before, .b::before { content: ""; width: 9px; border-top: 1px dotted #888; position: absolute; left: 11px; top: 50%; }
.a::after, .b::after { content: ""; border-left: 1px dotted #999; position: absolute; left: 11px; top: 0; bottom: 0; }
.def::after { bottom: 60%; }
.b::before, .b::after { left: 28px; }
.last::after { bottom: 50%; }
.b { padding-left: 39px; }
.b span { flex: 1; padding-left: 3px; margin-left: -3px; align-self: stretch; display: flex; align-items: center; margin-right: 1px; }
.sel span { background: #9e9e9e; }
.c { padding-left: 7px; }
.minus { position: absolute; left: 7px; width: 9px; height: 9px; border: 1px solid #999; background: #fff; font: 8px/7px "DejaVu Sans", sans-serif; text-align: center; z-index: 1; }
.vs { flex: none; width: 16px; background: #f0f0f0; display: flex; flex-direction: column; align-items: center; padding: 6px 0 4px; }
.vs svg { width: 8px; height: 7px; }
.vs i { width: 14px; height: 128px; background: #cdcdcd; margin: 54px 0 auto; }
.hs { flex: 1; display: flex; align-items: center; background: #f0f0f0; padding: 0 20px 0 5px; }
.hs svg { width: 7px; height: 9px; }
.hs i { width: 101px; height: 14px; background: #cdcdcd; margin: 0 auto 0 35px; }
.detail { flex: 1; margin: 7px 0 4px; border: 1px solid #999; background: #5a5a5a; }
.vtabs { flex: none; width: 22px; display: flex; flex-direction: column; padding: 23px 3px 0 0; }
.vtabs button { height: 108px; writing-mode: vertical-rl; transform: rotate(180deg); justify-content: center; background: #505050; border: 1px solid #333; border-right: 0; border-radius: 4px 0 0 4px; color: #aaa; }
.vtabs .on { background: #5b5b5b; color: #eee; }

.right { flex: 1; min-width: 0; display: flex; flex-direction: column; }
.stage { flex: 1; min-height: 0; display: flex; }
.viewport { flex: 1; min-width: 0; position: relative; background: #202731; margin-top: 1px; overflow: hidden; }
.model { position: absolute; inset: 0; width: 100%; height: 100%; }
.vhead { position: relative; z-index: 1; display: flex; justify-content: space-between; align-items: center; padding: 5px 10px 0 3px; color: #e8e8e8; }
.vhead svg { width: 46px; height: 12px; }
.cube { position: absolute; right: 9px; top: 31px; width: 80px; display: flex; flex-direction: column; align-items: center; gap: 10px; }
.cube > svg { width: 80px; height: 80px; }
.ct { fill: #b9bbbf; font: bold 11px "Liberation Sans", sans-serif; text-anchor: middle; }
.top { fill: #333; font: bold 7px "Liberation Sans", sans-serif; text-anchor: middle; }
.cube button { width: 45px; height: 17px; border-radius: 3px; background: #85878f; border: 1px solid #a9abb2; color: #33363e; justify-content: center; gap: 5px; }
.cube button svg { width: 8px; height: 6px; }
.stools { flex: none; width: 26px; margin-left: 3px; padding: 3px 2px 0 2px; display: flex; flex-direction: column; background: #575757; border-left: 1px solid #777; border-right: 2px solid #484848; overflow: hidden; }
.stools button { flex: 1; min-height: 0; justify-content: center; }
.stools hr { flex: none; width: 18px; height: 2px; background: #ddd; border: 0; margin: 2px auto; }
.grip { height: 6px; background: repeating-linear-gradient(90deg, #999 0 1px, #555 1px 3px); }
.stools .grip { margin: 2px 2px; height: 5px; }
.cmd { flex: none; height: 61px; display: flex; border-top: 2px solid #777; }
.cmdside { width: 22px; display: flex; flex-direction: column; align-items: center; gap: 8px; padding-top: 3px; background: linear-gradient(#888, #333); }
.cmdside .grip { width: 16px; }
.cmdside svg { width: 12px; height: 12px; }
.cmdmain { flex: 1; display: flex; flex-direction: column; color: #111; }
.cmdmain pre { margin: 0; flex: 1; padding: 8px 2px 0; background: #c8c8c8; border-bottom: 1px solid #888; font: 11px/14px "DejaVu Sans Mono", monospace; }
.prompt { height: 20px; background: #fff; display: flex; align-items: center; padding-left: 4px; }
.prompt svg { width: 14px; height: 12px; } .prompt .dd { margin: 0 4px 0 3px; }
.caret { width: 1px; height: 14px; background: #666; }
.prompt input { flex: 1; }

.status { flex: none; height: 28px; display: flex; align-items: center; background: #373737; padding-right: 8px; border-top: 1px solid #484848; }
.layouts { display: flex; align-self: flex-start; flex: 1; padding-left: 12px; color: #b5b5b5; }
.layouts button { height: 17px; width: 58px; margin-right: 3px; justify-content: center; background: linear-gradient(#4c4c4c, #5c5c5c); border-radius: 4px 4px 10px 10px; }
.layouts .on { width: 52px; background: linear-gradient(#6a6a6a, #858585); color: #fff; font-weight: 700; }
.layouts .add { width: 22px; font-size: 14px; color: #ddd; }
.reading { color: #eee; }
.progress { width: 187px; height: 17px; margin-left: 5px; border: 1px solid #111; background: repeating-linear-gradient(135deg, #272727 0 16px, #303030 16px 32px); }

.taskbar { flex: none; height: 37px; display: flex; background: #04080f; }
.start { width: 45px; justify-content: center; } .start svg { width: 15px; height: 15px; }
.search { width: 322px; display: flex; align-items: center; background: #f1f1f1; color: #333; padding: 0 13px 0 9px; }
.ring { width: 19px; height: 19px; border: 3px solid #111; border-radius: 50%; margin-right: 10px; }
.search input { flex: 1; font-size: 13px; } .search input::placeholder { color: #444; opacity: 1; }
.search svg { width: 12px; height: 18px; }
.pins { display: flex; flex: 1; }
.pins button { width: 46px; padding-bottom: 1px; justify-content: center; }
.pins svg { width: 21px; height: 21px; }
.pins .run { background: linear-gradient(#76b4e8, #76b4e8) center bottom / 38px 2px no-repeat; }
.pins .active { background-color: #363c45; background-size: 46px 2px; }
.tray { display: flex; align-items: center; gap: 7px; padding-right: 22px; }
.tray svg { fill: none; stroke: #e8e8e8; stroke-width: 1.200; }
.i16 { width: 16px; height: 16px; } .i12 { width: 12px; height: 12px; }
.tray .chev { margin: 0 1px 0 12px; }
.tray time { text-align: center; line-height: 16px; color: #f0f0f0; }
.tray .note { margin-left: 9px; }
```
